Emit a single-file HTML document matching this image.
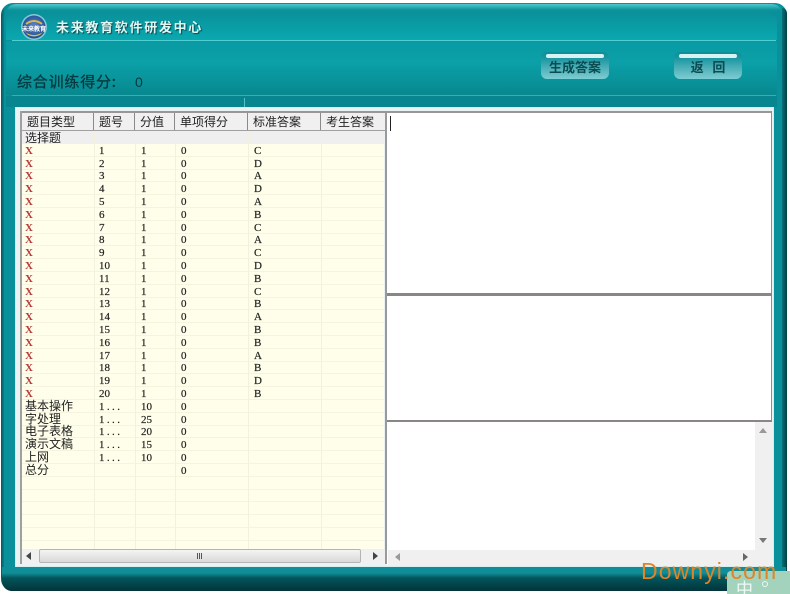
<!DOCTYPE html>
<html lang="zh"><head><meta charset="utf-8"><title>未来教育软件研发中心</title>
<style>
html,body{margin:0;padding:0;background:#fff}
#p{position:relative;width:790px;height:594px;overflow:hidden;background:#fff;font-family:"Liberation Sans","WenQuanYi Zen Hei","Noto Sans CJK SC",sans-serif}
.a{position:absolute}
#grid{position:absolute;left:22px;top:131px;width:362px;height:418px;background:#fefeea;overflow:hidden}
.r{position:absolute;left:0;width:362px;height:13px;border-bottom:1px solid #f6f4de;box-sizing:border-box}
.c{position:absolute;top:0;bottom:0;width:1px;background:#f3f1de}
.t{position:absolute;white-space:nowrap;font-family:"Liberation Serif",serif;font-size:11px;line-height:13px;color:#222;top:1px;-webkit-text-stroke:.2px #222}
.x{left:3px;color:#b83a36;font-weight:bold;-webkit-text-stroke:0}.n{left:77px}.s{left:119px}.g{left:159px}.k{left:232px}
.d{letter-spacing:2.4px}
.z{position:absolute;left:3px;top:-1px;font-family:"WenQuanYi Zen Hei","Noto Sans CJK SC",sans-serif;font-size:12px;line-height:13px;color:#222;white-space:nowrap}
.h{position:absolute;top:113px;height:17px;line-height:18px;font-size:12px;color:#222;background:#f0f0f0;border-right:1px solid #8a8a8a;box-sizing:border-box;white-space:nowrap;padding-left:5px;font-family:"WenQuanYi Zen Hei","Noto Sans CJK SC",sans-serif}
.btn{position:absolute;top:52px;width:68px;height:27px;border-radius:6px;background:linear-gradient(#0b8e98 0,#1d98a2 25%,#4fb1b9 60%,#7ccdd3);font-size:13px;font-weight:bold;color:#0c4b50;text-align:center;line-height:29px;white-space:nowrap;font-family:"WenQuanYi Zen Hei","Noto Sans CJK SC",sans-serif}
.btn i{position:absolute;left:5px;right:5px;top:2px;height:4px;border-radius:2px;background:#d8f2f2}
.sb{position:absolute;background:#f0f0f0}
</style></head><body><div id="p">
<div class="a" style="left:1px;top:3px;width:786px;height:588px;border-radius:12px;background:linear-gradient(90deg,#045a62 0,#0a8d96 4px,#0a8d96 7px,#0a939b 100%)"></div>
<div class="a" style="left:782px;top:8px;width:5px;height:580px;background:linear-gradient(90deg,#07717a,#033f46);border-radius:0 8px 0 0"></div>
<div class="a" style="left:4px;top:5px;width:778px;height:566px;border-radius:14px 14px 0 0;background:#09909a"></div>
<div class="a" style="left:6px;top:4px;width:776px;height:10px;border-radius:12px 12px 0 0;background:linear-gradient(#4fc9cc,#0b939b 60%,#0b8f98)"></div>
<div class="a" style="left:6px;top:12px;width:771px;height:28px;border-radius:10px 10px 0 0;background:linear-gradient(#0a9099,#0aa8b0)"></div>
<div class="a" style="left:12px;top:40px;width:764px;height:1px;background:#4ed0d2"></div>
<div class="a" style="left:6px;top:41px;width:771px;height:54px;background:linear-gradient(#0a9aa3,#0ba0a8 40%,#08888f)"></div>
<div class="a" style="left:12px;top:95px;width:764px;height:1px;background:#2cb2b8"></div>
<div class="a" style="left:6px;top:96px;width:771px;height:11px;background:#08868f"></div>
<div class="a" style="left:244px;top:98px;width:1px;height:9px;background:#54c2c6"></div>
<div class="a" style="left:2px;top:567px;width:784px;height:24px;border-radius:0 0 10px 10px;background:linear-gradient(#0f8e97 0,#0f8e97 6px,#04555c 11px,#02343a 100%)"></div>
<svg class="a" style="left:20px;top:13px" width="28" height="28" viewBox="0 0 28 28"><defs><radialGradient id="l" cx="50%" cy="45%" r="55%"><stop offset="0" stop-color="#5c86c6"/><stop offset="1" stop-color="#1e4c94"/></radialGradient></defs><circle cx="14" cy="14" r="13" fill="#86c8d8"/><circle cx="14" cy="14" r="11.5" fill="url(#l)"/><path d="M6 11Q14 5 22 11" stroke="#d8b84a" stroke-width="2" fill="none"/><path d="M5 19Q14 25 23 19L20 22Q14 25 8 22Z" fill="#d8c04e"/><text x="14" y="18" font-size="6" font-weight="bold" text-anchor="middle" fill="#fff" font-family="WenQuanYi Zen Hei,sans-serif">未来教育</text></svg>
<div class="a" style="left:56px;top:19px;font-size:13px;line-height:16px;font-weight:bold;letter-spacing:1.7px;color:#e2f6f2;text-shadow:1px 1px 1px #05494f;white-space:nowrap;font-family:'WenQuanYi Zen Hei','Noto Sans CJK SC',sans-serif">未来教育软件研发中心</div>
<div class="a" style="left:17px;top:73px;font-size:15px;line-height:18px;letter-spacing:.8px;color:#04393e;-webkit-text-stroke:.3px #04393e;white-space:nowrap;font-family:'WenQuanYi Zen Hei','Noto Sans CJK SC',sans-serif">综合训练得分:</div>
<div class="a" style="left:135px;top:73px;font-size:14px;line-height:18px;color:#04393e">0</div>
<div class="btn" style="left:541px"><i></i>生成答案</div>
<div class="btn" style="left:674px"><i></i>返&nbsp;&nbsp;&nbsp;回</div>

<div class="a" style="left:15px;top:107px;width:759px;height:460px;background:#e9f3f3;border:1px solid #d8eeee;box-sizing:border-box"></div>
<div class="a" style="left:20px;top:111px;width:752px;height:2px;background:#9a9597"></div>
<div class="a" style="left:20px;top:111px;width:2px;height:453px;background:#a0a0a0"></div>
<div class="a" style="left:771px;top:111px;width:1px;height:310px;background:#8f8f8f"></div>
<div class="h" style="left:22px;width:72px">题目类型</div>
<div class="h" style="left:94px;width:41px">题号</div>
<div class="h" style="left:135px;width:40px">分值</div>
<div class="h" style="left:175px;width:73px">单项得分</div>
<div class="h" style="left:248px;width:73px">标准答案</div>
<div class="h" style="left:321px;width:64px;border-right:0">考生答案</div>
<div class="a" style="left:22px;top:130px;width:363px;height:1px;background:#a0a0a0"></div>

<div id="grid">
<div class="a" style="left:0;top:0;width:362px;height:13px;background:#efefef"></div>
<div class="z" style="top:0">选择题</div>
<div class="r" style="top:13px"><span class="t x">X</span><span class="t n">1</span><span class="t s">1</span><span class="t g">0</span><span class="t k">C</span></div>
<div class="r" style="top:26px"><span class="t x">X</span><span class="t n">2</span><span class="t s">1</span><span class="t g">0</span><span class="t k">D</span></div>
<div class="r" style="top:38px"><span class="t x">X</span><span class="t n">3</span><span class="t s">1</span><span class="t g">0</span><span class="t k">A</span></div>
<div class="r" style="top:51px"><span class="t x">X</span><span class="t n">4</span><span class="t s">1</span><span class="t g">0</span><span class="t k">D</span></div>
<div class="r" style="top:64px"><span class="t x">X</span><span class="t n">5</span><span class="t s">1</span><span class="t g">0</span><span class="t k">A</span></div>
<div class="r" style="top:77px"><span class="t x">X</span><span class="t n">6</span><span class="t s">1</span><span class="t g">0</span><span class="t k">B</span></div>
<div class="r" style="top:90px"><span class="t x">X</span><span class="t n">7</span><span class="t s">1</span><span class="t g">0</span><span class="t k">C</span></div>
<div class="r" style="top:102px"><span class="t x">X</span><span class="t n">8</span><span class="t s">1</span><span class="t g">0</span><span class="t k">A</span></div>
<div class="r" style="top:115px"><span class="t x">X</span><span class="t n">9</span><span class="t s">1</span><span class="t g">0</span><span class="t k">C</span></div>
<div class="r" style="top:128px"><span class="t x">X</span><span class="t n">10</span><span class="t s">1</span><span class="t g">0</span><span class="t k">D</span></div>
<div class="r" style="top:141px"><span class="t x">X</span><span class="t n">11</span><span class="t s">1</span><span class="t g">0</span><span class="t k">B</span></div>
<div class="r" style="top:154px"><span class="t x">X</span><span class="t n">12</span><span class="t s">1</span><span class="t g">0</span><span class="t k">C</span></div>
<div class="r" style="top:166px"><span class="t x">X</span><span class="t n">13</span><span class="t s">1</span><span class="t g">0</span><span class="t k">B</span></div>
<div class="r" style="top:179px"><span class="t x">X</span><span class="t n">14</span><span class="t s">1</span><span class="t g">0</span><span class="t k">A</span></div>
<div class="r" style="top:192px"><span class="t x">X</span><span class="t n">15</span><span class="t s">1</span><span class="t g">0</span><span class="t k">B</span></div>
<div class="r" style="top:205px"><span class="t x">X</span><span class="t n">16</span><span class="t s">1</span><span class="t g">0</span><span class="t k">B</span></div>
<div class="r" style="top:218px"><span class="t x">X</span><span class="t n">17</span><span class="t s">1</span><span class="t g">0</span><span class="t k">A</span></div>
<div class="r" style="top:230px"><span class="t x">X</span><span class="t n">18</span><span class="t s">1</span><span class="t g">0</span><span class="t k">B</span></div>
<div class="r" style="top:243px"><span class="t x">X</span><span class="t n">19</span><span class="t s">1</span><span class="t g">0</span><span class="t k">D</span></div>
<div class="r" style="top:256px"><span class="t x">X</span><span class="t n">20</span><span class="t s">1</span><span class="t g">0</span><span class="t k">B</span></div>
<div class="r" style="top:269px"><span class="z">基本操作</span><span class="t n d">1...</span><span class="t s">10</span><span class="t g">0</span></div>
<div class="r" style="top:282px"><span class="z">字处理</span><span class="t n d">1...</span><span class="t s">25</span><span class="t g">0</span></div>
<div class="r" style="top:294px"><span class="z">电子表格</span><span class="t n d">1...</span><span class="t s">20</span><span class="t g">0</span></div>
<div class="r" style="top:307px"><span class="z">演示文稿</span><span class="t n d">1...</span><span class="t s">15</span><span class="t g">0</span></div>
<div class="r" style="top:320px"><span class="z">上网</span><span class="t n d">1...</span><span class="t s">10</span><span class="t g">0</span></div>
<div class="r" style="top:333px"><span class="z">总分</span><span class="t g">0</span></div>
<div class="r" style="top:346px"></div><div class="r" style="top:358px"></div><div class="r" style="top:371px"></div><div class="r" style="top:384px"></div><div class="r" style="top:397px"></div>
<div class="c" style="left:72px"></div><div class="c" style="left:113px"></div><div class="c" style="left:153px"></div><div class="c" style="left:226px"></div><div class="c" style="left:299px"></div>
</div>

<div class="sb" style="left:22px;top:549px;width:363px;height:15px"></div>
<div class="a" style="left:39px;top:549px;width:322px;height:14px;border:1px solid #b4b4b4;border-radius:2px;box-sizing:border-box;background:linear-gradient(#f4f4f4,#d9d9d9)"></div>
<div class="a" style="left:197px;top:553px;width:6px;height:6px;background:repeating-linear-gradient(90deg,#555 0,#555 1px,transparent 1px,transparent 2px)"></div>
<svg class="a" style="left:26px;top:552px" width="6" height="8"><path d="M5 0V8L0 4Z" fill="#444"/></svg>
<svg class="a" style="left:373px;top:552px" width="6" height="8"><path d="M0 0V8L5 4Z" fill="#444"/></svg>

<div class="a" style="left:385px;top:113px;width:2px;height:451px;background:#9a9a9a"></div>
<div class="a" style="left:387px;top:113px;width:384px;height:452px;background:#fff"></div>
<div class="a" style="left:390px;top:116px;width:1px;height:15px;background:#222"></div>
<div class="a" style="left:387px;top:293px;width:385px;height:3px;background:#8a8686"></div>
<div class="a" style="left:387px;top:420px;width:385px;height:2px;background:#8a8686"></div>
<div class="sb" style="left:388px;top:550px;width:368px;height:15px"></div>
<div class="sb" style="left:755px;top:422px;width:16px;height:143px"></div>
<svg class="a" style="left:395px;top:553px" width="6" height="8"><path d="M5 0V8L0 4Z" fill="#999"/></svg>
<svg class="a" style="left:743px;top:553px" width="6" height="8"><path d="M0 0V8L5 4Z" fill="#666"/></svg>
<svg class="a" style="left:759px;top:428px" width="8" height="5"><path d="M0 5H8L4 0Z" fill="#999"/></svg>
<svg class="a" style="left:759px;top:538px" width="8" height="5"><path d="M0 0H8L4 5Z" fill="#777"/></svg>

<div class="a" style="left:727px;top:571px;width:63px;height:23px;background:#a3d3bd;border-radius:4px 0 0 0"></div>
<div class="a" style="left:736px;top:578px;font-size:17px;line-height:20px;color:#eef8f2;white-space:nowrap;font-family:'WenQuanYi Zen Hei','Noto Sans CJK SC',sans-serif">中</div>
<div class="a" style="left:762px;top:581px;width:6px;height:6px;border:1px solid #eef8f2;border-radius:50%;box-sizing:border-box"></div>
<div class="a" style="left:641px;top:558px;font-size:23px;line-height:26px;letter-spacing:1.1px;color:#e08428;white-space:nowrap">Downyi.com</div>
</div></body></html>
